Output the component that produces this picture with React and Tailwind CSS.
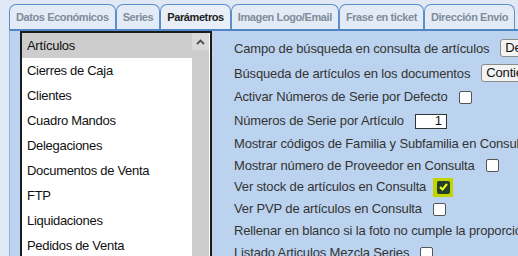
import React from 'react';

const tabs = [
    { label: 'Datos Económicos' },
    { label: 'Series' },
    { label: 'Parámetros', active: true },
    { label: 'Imagen Logo/Email' },
    { label: 'Frase en ticket' },
    { label: 'Dirección Envío' },
];

const modules = [
    'Artículos',
    'Cierres de Caja',
    'Clientes',
    'Cuadro Mandos',
    'Delegaciones',
    'Documentos de Venta',
    'FTP',
    'Liquidaciones',
    'Pedidos de Venta',
    'Proveedores',
];

const Checkbox = () => (
    <span className="ml-[11px] w-[13px] h-[13px] border border-[#555] rounded-[2px] bg-white shrink-0" />
);

const CheckedBox = () => (
    <span className="ml-[7px] w-[20px] h-[19px] bg-[#c2d500] flex items-center justify-center shrink-0">
        <span className="w-[13px] h-[13px] rounded-[2px] bg-[#22402a] flex items-center justify-center">
            <svg width="9" height="8" viewBox="0 0 9 8">
                <polyline points="1,4 3.5,6.5 8,1" fill="none" stroke="#f2ff1a" strokeWidth="2" />
            </svg>
        </span>
    </span>
);

const Select = ({ text }) => (
    <span className="ml-[11px] mt-[3px] h-[18px] w-[120px] shrink-0 border border-[#8c8c8c] rounded-[3px] bg-[#f3f3f3] pl-[4px] flex items-center text-[13px] text-[#111]">
        {text}
    </span>
);

const Row = ({ h, children }) => (
    <div className={`flex items-center whitespace-nowrap ${h}`}>{children}</div>
);

export default function App() {
    return (
        <div className="w-[518px] h-[256px] overflow-hidden bg-[#dfe8f4] font-['Liberation_Sans',Arial,sans-serif]">
            {/* tabs */}
            <div className="flex pl-[9px] pt-[4px]">
                {tabs.map(tab => (
                    <div
                        key={tab.label}
                        className={`h-[25px] px-[6px] flex items-center border border-b-0 border-[#5b8fcc] rounded-t-[7px] text-[11px] font-bold tracking-[-0.4px] whitespace-nowrap ${tab.active ? 'bg-[#e8eff8] text-[#222]' : 'bg-[#e3ebf6] text-[#7f8c9b]'}`}
                    >
                        {tab.label}
                    </div>
                ))}
            </div>

            {/* panel */}
            <div className="ml-[9px] h-[300px] border-t-2 border-l border-t-[#4e86c6] border-l-[#8db0dc] bg-[#bcd3ef] flex">
                {/* module list */}
                <div className="ml-[10px] w-[192px] h-[260px] border-2 border-[#1b1b1b] bg-white flex pr-[1px] shrink-0">
                    <div className="flex-1">
                        {modules.map((m, i) => (
                            <div
                                key={m}
                                className={`h-[25px] pl-[5px] flex items-center text-[13px] tracking-[-0.3px] text-[#111] ${i === 0 ? 'bg-[#cdcdcd]' : ''}`}
                            >
                                {m}
                            </div>
                        ))}
                    </div>
                    <div className="w-[17px] bg-[#cdcdcd]">
                        <div className="h-[17px] bg-[#dadada] flex items-center justify-center">
                            <svg width="9" height="6" viewBox="0 0 9 6">
                                <polyline points="1,5 4.5,1.5 8,5" fill="none" stroke="#505050" strokeWidth="1.8" />
                            </svg>
                        </div>
                    </div>
                </div>

                {/* options */}
                <div className="ml-[22px] pt-[2px] flex flex-col text-[13px] tracking-[-0.15px] text-[#333]">
                    <Row h="h-[26px] items-start pt-[6px]">
                        Campo de búsqueda en consulta de artículos
                        <span className="-mt-[3px] flex"><Select text="Desc" /></span>
                    </Row>
                    <Row h="h-[26px] items-start pt-[5px]">
                        Búsqueda de artículos en los documentos
                        <span className="-mt-[3px] flex"><Select text="Contienen" /></span>
                    </Row>
                    <Row h="h-[24px]">
                        Activar Números de Serie por Defecto
                        <Checkbox />
                    </Row>
                    <Row h="h-[24px]">
                        Números de Serie por Artículo
                        <span className="ml-[11px] w-[32px] h-[15px] border border-[#333] bg-white flex items-center justify-end pr-[4px] text-[#111]">
                            1
                        </span>
                    </Row>
                    <Row h="h-[22px]">Mostrar códigos de Familia y Subfamilia en Consulta</Row>
                    <Row h="h-[21px]">
                        Mostrar número de Proveedor en Consulta
                        <Checkbox />
                    </Row>
                    <Row h="h-[22px]">
                        Ver stock de artículos en Consulta
                        <CheckedBox />
                    </Row>
                    <Row h="h-[22px]">
                        Ver PVP de artículos en Consulta
                        <Checkbox />
                    </Row>
                    <Row h="h-[22px]">Rellenar en blanco si la foto no cumple la proporción</Row>
                    <Row h="h-[22px]">
                        Listado Articulos Mezcla Series
                        <Checkbox />
                    </Row>
                </div>
            </div>
        </div>
    );
}
